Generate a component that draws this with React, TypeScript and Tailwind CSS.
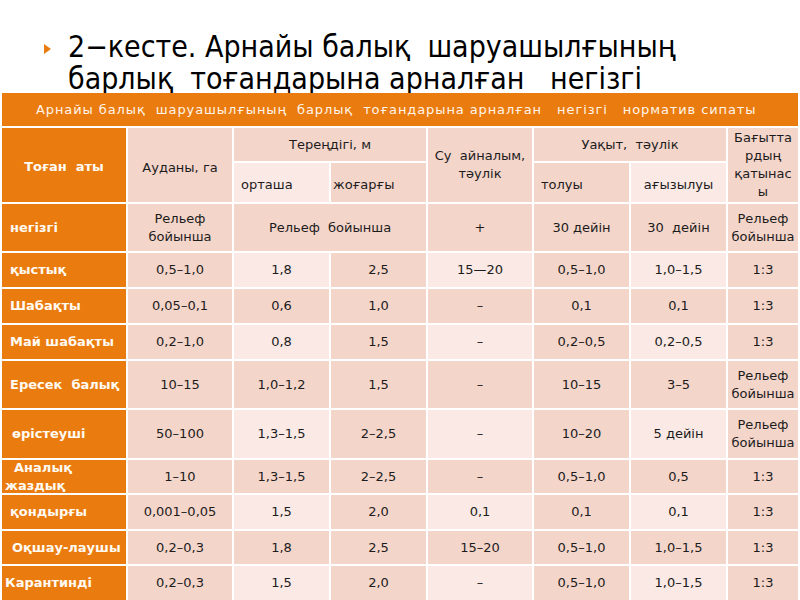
import React from "react";

type Tone = "o" | "d" | "l";

const toneCls: Record<Tone, string> = {
  o: "bg-[#ea7b0e] text-[#fffaf2] font-bold",
  d: "bg-[#f4d5ca] text-[#1c1c1c]",
  l: "bg-[#fae9e4] text-[#1c1c1c]",
};

function C({
  t,
  className = "",
  children,
}: {
  t: Tone;
  className?: string;
  children?: React.ReactNode;
}) {
  return (
    <div className={`flex items-center ${toneCls[t]} ${className}`}>
      {children}
    </div>
  );
}

type Row = {
  name: string;
  band: "d" | "l";
  cells: string[];
};

const rows: Row[] = [
  { name: "қыстық", band: "l", cells: ["0,5–1,0", "1,8", "2,5", "15—20", "0,5–1,0", "1,0–1,5", "1:3"] },
  { name: "Шабақты", band: "d", cells: ["0,05–0,1", "0,6", "1,0", "–", "0,1", "0,1", "1:3"] },
  { name: "Май шабақты", band: "l", cells: ["0,2–1,0", "0,8", "1,5", "–", "0,2–0,5", "0,2–0,5", "1:3"] },
  { name: "Ересек  балық", band: "d", cells: ["10–15", "1,0–1,2", "1,5", "–", "10–15", "3–5", "Рельеф бойынша"] },
  { name: "өрістеуші", band: "l", cells: ["50–100", "1,3–1,5", "2–2,5", "–", "10–20", "5 дейін", "Рельеф бойынша"] },
  { name: "Аналық жаздық", band: "d", cells: ["1–10", "1,3–1,5", "2–2,5", "–", "0,5–1,0", "0,5", "1:3"] },
  { name: "қондырғы", band: "l", cells: ["0,001–0,05", "1,5", "2,0", "0,1", "0,1", "0,1", "1:3"] },
  { name: "Оқшау-лаушы", band: "d", cells: ["0,2–0,3", "1,8", "2,5", "15–20", "0,5–1,0", "1,0–1,5", "1:3"] },
  { name: "Карантинді", band: "l", cells: ["0,2–0,3", "1,5", "2,0", "–", "0,5–1,0", "1,0–1,5", "1:3"] },
];

const nameCls: Record<string, string> = {
  "қыстық": "pl-[8px]",
  "Шабақты": "pl-[8px]",
  "Май шабақты": "pl-[8px]",
  "Ересек  балық": "pl-[8px]",
  "өрістеуші": "pl-[10px]",
  "Аналық жаздық": "pl-[3px]",
  "қондырғы": "pl-[8px]",
  "Оқшау-лаушы": "pl-[10px]",
  "Карантинді": "pl-[3px]",
};

function Relief() {
  return (
    <span>
      Рельеф
      <br />
      бойынша
    </span>
  );
}

export default function App() {
  return (
    <div className="w-[800px] h-[600px] bg-white overflow-hidden font-['DejaVu_Sans',sans-serif]">
      <div className="h-[93px] overflow-hidden flex items-start pl-[44px] pt-[31px]">
        <svg width="7" height="10" viewBox="0 0 7 10" className="mt-[13px] shrink-0">
          <polygon points="0,0 7,5 0,10" fill="#ea7b0e" />
        </svg>
        <div className="ml-[17px] text-[30px] leading-[32px] text-black font-['DejaVu_Sans_Condensed','Liberation_Sans_Narrow',sans-serif] [font-stretch:condensed] whitespace-pre">
          {"2−кесте. Арнайы балық  шаруашылғының\nбарлық  тоғандарына арналған   негізгі"}
        </div>
      </div>
      <div className="mx-[2px] grid grid-cols-[124px_104px_95px_95px_104px_95px_95px_70px] grid-rows-[33px_33px_39px_47px_34px_34px_34px_47px_48px_33px_34px_33px_34px] gap-[2px] bg-white text-[13px] leading-[18px]">
        <div className="col-span-8 bg-[#ea7b0e] text-[#fff5ea] flex items-center pl-[34px] whitespace-pre tracking-[0.9px]">
          {"Арнайы балық  шаруашылғының  барлық  тоғандарына арналған   негізгі   норматив сипаты"}
        </div>

        <C t="o" className="row-span-2 justify-center pt-[4px] whitespace-pre">Тоған  аты</C>
        <C t="d" className="row-span-2 justify-center pt-[6px]">Ауданы, га</C>
        <C t="d" className="col-span-2 justify-center whitespace-pre">Тереңдігі, м</C>
        <C t="d" className="row-span-2 justify-center text-center whitespace-pre">{"Су  айналым,\nтәулік"}</C>
        <C t="d" className="col-span-2 justify-center whitespace-pre">Уақыт,  тәулік</C>
        <C t="d" className="row-span-2 justify-center text-center">
          <span>
            Бағытта
            <br />
            рдың
            <br />
            қатынас
            <br />ы
          </span>
        </C>
        <C t="l" className="pl-[7px] pt-[4px]">орташа</C>
        <C t="d" className="pl-[2px] pt-[4px]">жоғарғы</C>
        <C t="d" className="pl-[7px] pt-[4px]">толуы</C>
        <C t="l" className="justify-center pt-[4px]">ағызылуы</C>

        <C t="o" className="pl-[8px]">негізгі</C>
        <C t="d" className="justify-center text-center">
          <Relief />
        </C>
        <C t="d" className="col-span-2 justify-center whitespace-pre">Рельеф  бойынша</C>
        <C t="d" className="justify-center">+</C>
        <C t="d" className="justify-center">30 дейін</C>
        <C t="d" className="justify-center whitespace-pre">30  дейін</C>
        <C t="d" className="justify-center text-center">
          <Relief />
        </C>

        {rows.map((r, i) => (
          <React.Fragment key={i}>
            <C t="o" className={`${nameCls[r.name]} whitespace-pre`}>
              {r.name === "Аналық жаздық" ? "  Аналық\nжаздық" : r.name}
            </C>
            {r.cells.map((v, j) => {
              const light = r.band === "l" && (j === 1 || j === 3 || j === 5);
              return (
                <C key={j} t={light ? "l" : "d"} className="justify-center text-center">
                  {v === "Рельеф бойынша" ? <Relief /> : v}
                </C>
              );
            })}
          </React.Fragment>
        ))}
      </div>
    </div>
  );
}
